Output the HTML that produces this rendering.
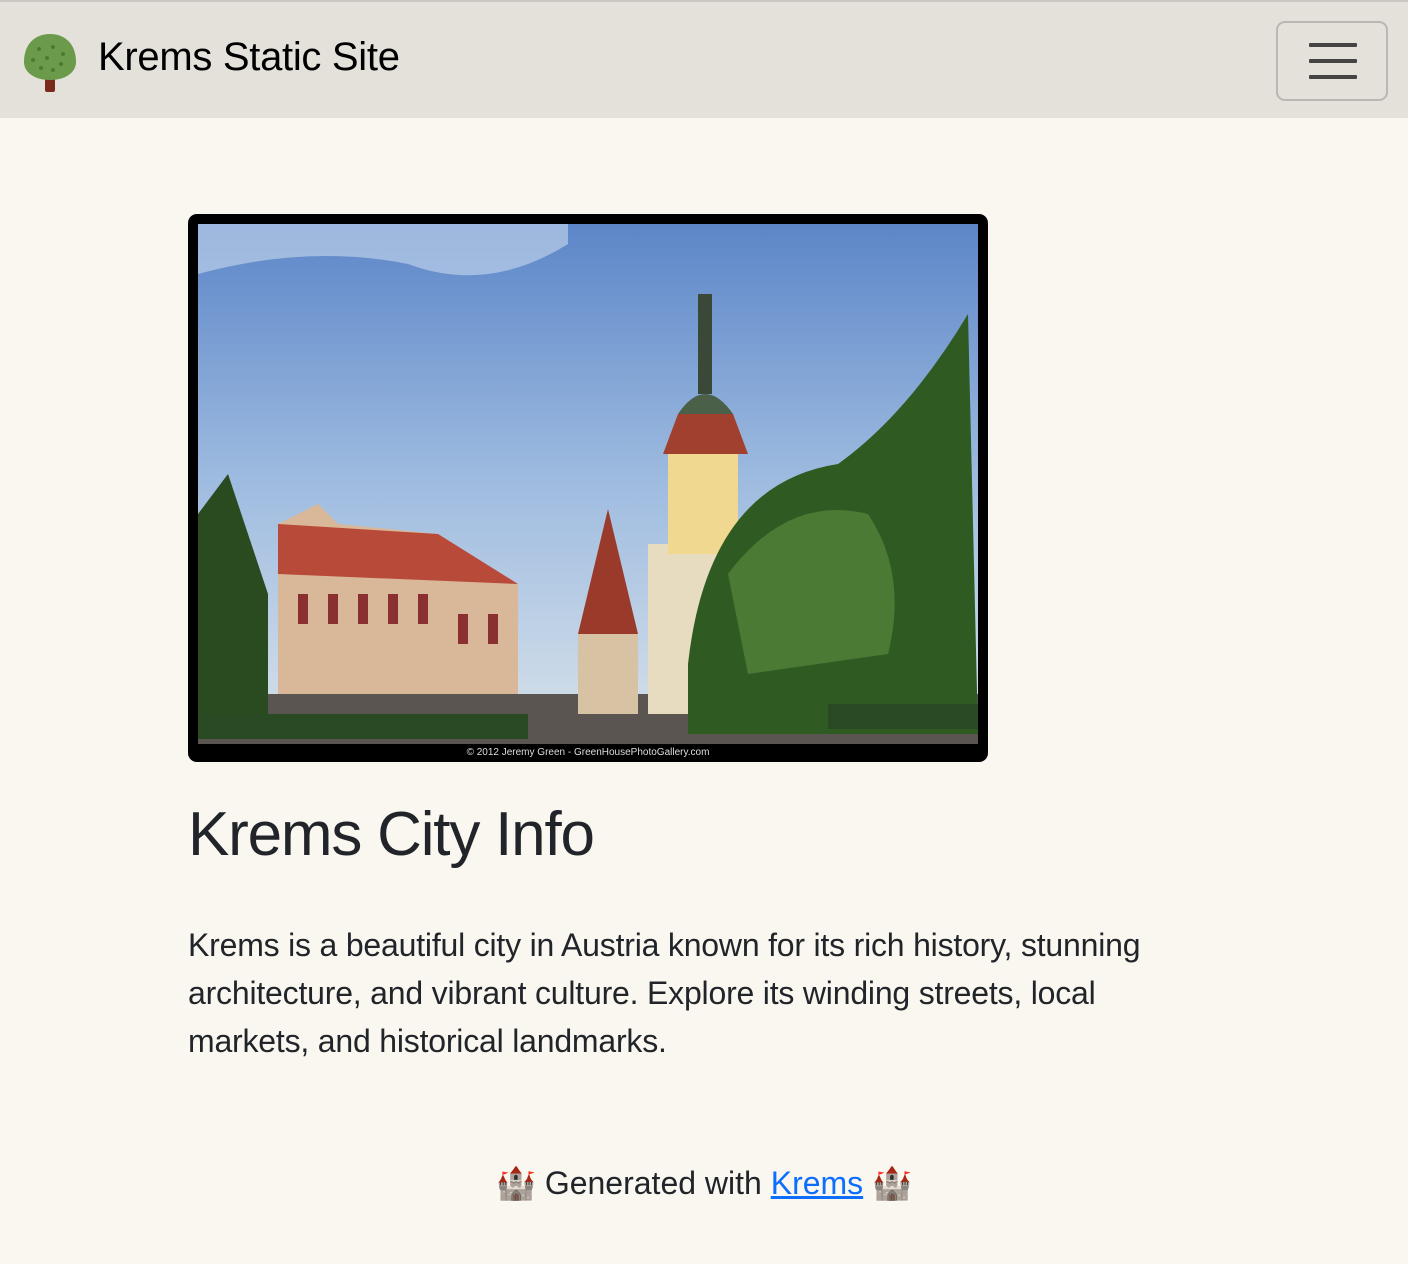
<!DOCTYPE html>
<html><head><meta charset="utf-8"><style>
*{box-sizing:border-box;margin:0;padding:0}
body{width:1408px;height:1264px;background:#faf7f1;font-family:"Liberation Sans",sans-serif;color:#212529;overflow:hidden;position:relative}
.nav{position:absolute;left:0;top:0;width:1408px;height:118px;background:#e4e1db;border-top:2px solid #c9c7c2}
.brand{position:absolute;left:98px;top:33px;font-size:40px;color:#000;letter-spacing:-0.3px}
.tog{position:absolute;left:1276px;top:19px;width:112px;height:80px;border:2px solid #b9b7b2;border-radius:9px}
.tog i{position:absolute;left:31px;width:48px;height:4px;background:#444;border-radius:1px}
.img{position:absolute;left:188px;top:214px;width:800px;height:548px;background:#000;border-radius:9px;overflow:hidden}
h1{position:absolute;left:188px;top:799px;font-size:62px;font-weight:300;letter-spacing:-1.2px;font-family:"Liberation Sans",sans-serif}
p{position:absolute;left:188px;top:921px;width:1010px;font-size:32px;line-height:48px;color:#212529;letter-spacing:-0.2px}
.foot{position:absolute;left:0;width:1408px;top:1164px;text-align:center;font-size:32px}
.foot a{color:#0d6efd;text-decoration:underline}
</style></head><body>
<div class="nav">
<svg style="position:absolute;left:21px;top:30px" width="58" height="64" viewBox="0 0 58 64"><rect x="24" y="46" width="10" height="14" rx="2" fill="#7a2a1b"/><path d="M29 2C14 2 3 12 3 30c0 10 10 18 26 18s26-8 26-18C55 12 44 2 29 2z" fill="#6a9a4a"/><g fill="#4c7a33"><circle cx="18" cy="17" r="2"/><circle cx="32" cy="15" r="2"/><circle cx="42" cy="22" r="2"/><circle cx="12" cy="28" r="2"/><circle cx="26" cy="26" r="2"/><circle cx="40" cy="32" r="2"/><circle cx="20" cy="36" r="2"/><circle cx="32" cy="38" r="2"/></g></svg>
<div class="brand">Krems Static Site</div>
<div class="tog"><i style="top:20px"></i><i style="top:36px"></i><i style="top:52px"></i></div>
</div>
<div class="img">
<svg width="800" height="548" viewBox="0 0 800 548" style="position:absolute;left:0;top:0">
<defs><linearGradient id="sky" x1="0" y1="0" x2="0" y2="1"><stop offset="0" stop-color="#5c86c8"/><stop offset=".5" stop-color="#9fbce0"/><stop offset="1" stop-color="#d8e2ea"/></linearGradient></defs>
<rect x="10" y="10" width="780" height="520" fill="url(#sky)"/>
<path d="M10 60 Q120 30 220 50 Q300 80 380 30 L380 10 10 10z" fill="#c9d8ec" opacity=".6"/>
<rect x="10" y="480" width="780" height="50" fill="#5a5550"/>
<path d="M90 310 L130 290 L150 310 L250 320 L330 370 L330 480 L90 480z" fill="#d8b898"/>
<path d="M90 310 L250 320 L330 370 L90 360z" fill="#b84a3a"/>
<g fill="#8a3030"><rect x="110" y="380" width="10" height="30"/><rect x="140" y="380" width="10" height="30"/><rect x="170" y="380" width="10" height="30"/><rect x="200" y="380" width="10" height="30"/><rect x="230" y="380" width="10" height="30"/><rect x="270" y="400" width="10" height="30"/><rect x="300" y="400" width="10" height="30"/></g>
<path d="M390 420 L420 295 L450 420z" fill="#9a3a2a"/><rect x="390" y="420" width="60" height="80" fill="#d8c2a4"/>
<rect x="460" y="330" width="80" height="170" fill="#e8dcc0"/>
<rect x="480" y="240" width="70" height="100" fill="#f0d890"/>
<path d="M475 240 L490 200 L545 200 L560 240z" fill="#a24030"/>
<path d="M490 200 Q517 160 545 200z" fill="#4a6048"/>
<rect x="510" y="80" width="14" height="100" fill="#3a4838"/>
<path d="M500 450 Q520 270 650 250 Q720 200 780 100 L790 520 L500 520z" fill="#2f5a22"/>
<path d="M540 360 Q600 280 680 300 Q720 360 700 440 L560 460z" fill="#4a7a34"/>
<path d="M10 300 L40 260 L80 380 L80 520 L10 520z" fill="#2a4a20"/>
<rect x="10" y="500" width="330" height="25" fill="#294a22"/>
<rect x="640" y="490" width="150" height="25" fill="#294a22"/>
<rect x="10" y="530" width="780" height="18" fill="#000"/>
<text x="400" y="541" font-size="10" fill="#ddd" text-anchor="middle" font-family="Liberation Sans">© 2012 Jeremy Green - GreenHousePhotoGallery.com</text>
</svg>
</div>
<h1>Krems City Info</h1>
<p>Krems is a beautiful city in Austria known for its rich history, stunning architecture, and vibrant culture. Explore its winding streets, local markets, and historical landmarks.</p>
<div class="foot">🏰 Generated with <a>Krems</a> 🏰</div>
</body></html>
